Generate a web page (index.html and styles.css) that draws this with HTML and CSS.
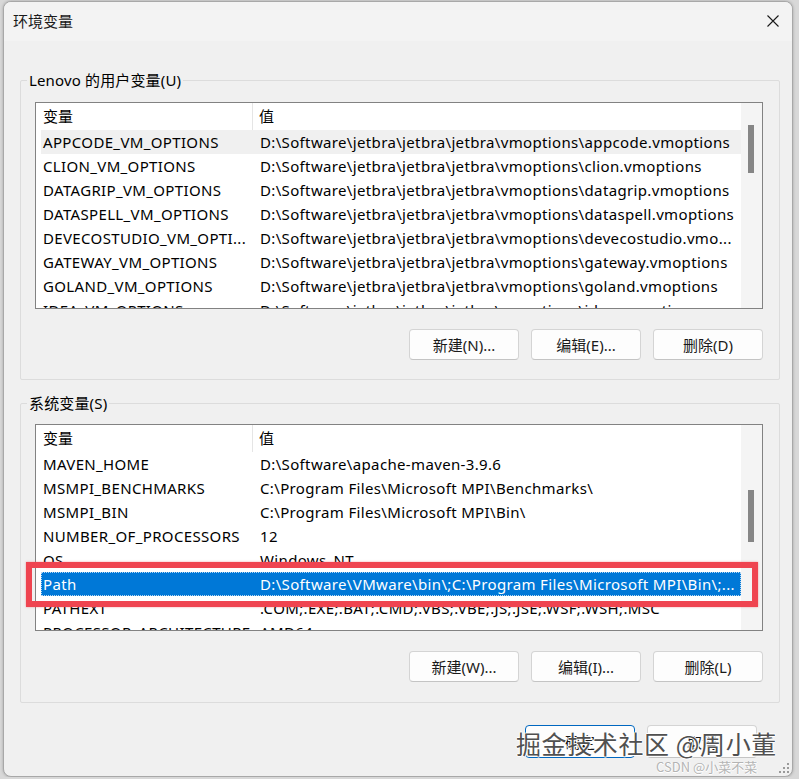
FILE: index.html
```html
<!DOCTYPE html>
<html lang="zh-CN">
<head>
    <meta charset="UTF-8">
    <title>环境变量</title>
    <link rel="stylesheet" href="styles.css">
</head>
<body>

    <div class="window">
        <div class="titlebar">
            <span class="title">环境变量</span>
            <svg class="close" width="12" height="12" viewBox="0 0 12 12">
                <path d="M0.5 0.5 L11.5 11.5 M11.5 0.5 L0.5 11.5" stroke="#1a1a1a" stroke-width="1.1" fill="none"/>
            </svg>
        </div>

        <fieldset class="group group-user">
            <legend>Lenovo 的用户变量(U)</legend>
            <div class="listview">
                <div class="list-main">
                    <div class="list-head">
                        <div class="head-cell first">变量</div>
                        <div class="head-cell">值</div>
                    </div>
                    <div class="row hot"><span>APPCODE_VM_OPTIONS</span><span>D:\Software\jetbra\jetbra\jetbra\vmoptions\appcode.vmoptions</span></div>
                    <div class="row"><span>CLION_VM_OPTIONS</span><span>D:\Software\jetbra\jetbra\jetbra\vmoptions\clion.vmoptions</span></div>
                    <div class="row"><span>DATAGRIP_VM_OPTIONS</span><span>D:\Software\jetbra\jetbra\jetbra\vmoptions\datagrip.vmoptions</span></div>
                    <div class="row"><span>DATASPELL_VM_OPTIONS</span><span>D:\Software\jetbra\jetbra\jetbra\vmoptions\dataspell.vmoptions</span></div>
                    <div class="row"><span>DEVECOSTUDIO_VM_OPTI...</span><span>D:\Software\jetbra\jetbra\jetbra\vmoptions\devecostudio.vmo...</span></div>
                    <div class="row"><span>GATEWAY_VM_OPTIONS</span><span>D:\Software\jetbra\jetbra\jetbra\vmoptions\gateway.vmoptions</span></div>
                    <div class="row"><span>GOLAND_VM_OPTIONS</span><span>D:\Software\jetbra\jetbra\jetbra\vmoptions\goland.vmoptions</span></div>
                    <div class="row"><span>IDEA_VM_OPTIONS</span><span>D:\Software\jetbra\jetbra\jetbra\vmoptions\idea.vmoptions</span></div>
                </div>
                <div class="scrollbar">
                    <div class="thumb thumb-user"></div>
                </div>
            </div>
            <div class="buttons">
                <button class="btn">新建(N)...</button>
                <button class="btn">编辑(E)...</button>
                <button class="btn">删除(D)</button>
            </div>
        </fieldset>

        <fieldset class="group group-system">
            <legend>系统变量(S)</legend>
            <div class="listview">
                <div class="list-main">
                    <div class="list-head">
                        <div class="head-cell first">变量</div>
                        <div class="head-cell">值</div>
                    </div>
                    <div class="row"><span>MAVEN_HOME</span><span>D:\Software\apache-maven-3.9.6</span></div>
                    <div class="row"><span>MSMPI_BENCHMARKS</span><span>C:\Program Files\Microsoft MPI\Benchmarks\</span></div>
                    <div class="row"><span>MSMPI_BIN</span><span>C:\Program Files\Microsoft MPI\Bin\</span></div>
                    <div class="row"><span>NUMBER_OF_PROCESSORS</span><span>12</span></div>
                    <div class="row"><span>OS</span><span>Windows_NT</span></div>
                    <div class="row selected"><span>Path</span><span>D:\Software\VMware\bin\;C:\Program Files\Microsoft MPI\Bin\;...</span></div>
                    <div class="row"><span>PATHEXT</span><span>.COM;.EXE;.BAT;.CMD;.VBS;.VBE;.JS;.JSE;.WSF;.WSH;.MSC</span></div>
                    <div class="row"><span>PROCESSOR_ARCHITECTURE</span><span>AMD64</span></div>
                </div>
                <div class="scrollbar">
                    <div class="thumb thumb-system"></div>
                </div>
            </div>
            <div class="buttons">
                <button class="btn">新建(W)...</button>
                <button class="btn">编辑(I)...</button>
                <button class="btn">删除(L)</button>
            </div>
        </fieldset>

        <div class="footer">
            <button class="btn default">确定</button>
            <button class="btn">取消</button>
        </div>

        <!-- annotation and watermark sit over the dialog -->
        <div class="highlight-box"></div>
        <div class="watermark">掘金技术社区 @周小董</div>
        <div class="watermark-small">CSDN @小菜不菜</div>
        <svg class="grip" width="10" height="10" viewBox="0 0 10 10">
            <rect x="8" y="0" width="2" height="2" fill="#9a9a9a"/>
            <rect x="4" y="4" width="2" height="2" fill="#9a9a9a"/>
            <rect x="8" y="4" width="2" height="2" fill="#9a9a9a"/>
            <rect x="0" y="8" width="2" height="2" fill="#9a9a9a"/>
            <rect x="4" y="8" width="2" height="2" fill="#9a9a9a"/>
            <rect x="8" y="8" width="2" height="2" fill="#9a9a9a"/>
        </svg>
    </div>

</body>
</html>
```

FILE: styles.css
```css
* {
    box-sizing: border-box;
    margin: 0;
    padding: 0;
}

body {
    font-family: 'Noto Sans', 'Noto Sans CJK SC', sans-serif;
    font-size: 15px;
    color: #000;
    background-color: #d8d8d8;
}

.window {
    position: relative;
    width: 790px;
    height: 776px;
    margin: 1px 0 0 3px;
    background-color: #f0f0f0;
    border: 1px solid #a8a8a8;
    border-radius: 8px;
    box-shadow: 0 0 3px rgba(0, 0, 0, 0.25);
    overflow: hidden;
}

.titlebar {
    height: 39px;
    display: flex;
    align-items: center;
    justify-content: space-between;
    padding: 0 13px 2px 9px;
    background-color: #f3f3f3;
}

.title {
    font-family: 'Noto Sans CJK SC', sans-serif;
    color: #1a1a1a;
}

/* group boxes */
.group {
    margin: 29px 12px 0 16px;
    padding: 12px 16px 19px 14px;
    border: 1px solid #dcdcdc;
    border-radius: 2px;
}

.group-system {
    margin-top: 13px;
    padding-top: 11px;
    padding-bottom: 20px;
}

.group legend {
    margin-left: -8px;
    padding: 0 2px;
    line-height: 20px;
    letter-spacing: 0.15px;
}

.listview {
    display: flex;
    height: 207px;
    background-color: #fff;
    border: 1px solid #828282;
    overflow: hidden;
}

.list-main {
    flex: 1;
    overflow: hidden;
}

.list-head {
    display: grid;
    grid-template-columns: 217px 1fr;
    height: 27px;
    align-items: center;
}

.head-cell {
    padding-left: 6px;
    height: 27px;
    line-height: 27px;
}

.head-cell.first {
    padding-left: 7px;
    border-right: 1px solid #e5e5e5;
}

.row {
    display: grid;
    grid-template-columns: 217px 1fr;
    height: 24px;
    line-height: 24px;
    margin-left: 5px;
    white-space: nowrap;
    letter-spacing: 0.35px;
}

.row span {
    padding-left: 2px;
    overflow: hidden;
}

.row.hot {
    background-color: #f0f0f0;
}

.row.selected {
    background-color: #0078d7;
    color: #fff;
    outline: 1px dotted rgba(255, 255, 255, 0.7);
    outline-offset: -1px;
}

.scrollbar {
    position: relative;
    width: 21px;
    background-color: #f4f4f4;
}

.thumb {
    position: absolute;
    left: 7px;
    width: 6px;
    background-color: #868686;
}

.thumb-user {
    top: 22px;
    height: 48px;
}

.thumb-system {
    top: 65px;
    height: 52px;
}

/* buttons */
.buttons {
    display: flex;
    justify-content: flex-end;
    gap: 12px;
    margin-top: 20px;
}

.btn {
    width: 110px;
    height: 31px;
    font-family: 'Noto Sans', 'Noto Sans CJK SC', sans-serif;
    font-size: 15px;
    color: #1a1a1a;
    background-color: #fdfdfd;
    border: 1px solid #d4d4d4;
    border-bottom-color: #c4c4c4;
    border-radius: 4px;
}

.btn.default {
    border: 1px solid #0067c0;
}

.footer {
    display: flex;
    justify-content: flex-end;
    gap: 12px;
    margin-top: 22px;
    padding-right: 35px;
}

.footer .btn {
    height: 33px;
}

/* red annotation over the Path row */
.highlight-box {
    position: absolute;
    left: 22px;
    top: 560px;
    width: 732px;
    height: 45px;
    border: 6px solid #ef4450;
    box-shadow: 0 0 2px rgba(239, 68, 80, 0.5);
}

.watermark {
    position: absolute;
    left: 512px;
    top: 723px;
    font-family: 'Noto Sans CJK SC', sans-serif;
    font-size: 25px;
    letter-spacing: 0.6px;
    color: #505050;
    white-space: nowrap;
    text-shadow: 1px 0 #fff, -1px 0 #fff, 0 1px #fff, 0 -1px #fff;
}

.watermark-small {
    position: absolute;
    left: 652px;
    top: 755px;
    font-family: 'Noto Sans CJK SC', sans-serif;
    font-size: 13px;
    color: #b4b4b4;
    white-space: nowrap;
    text-shadow: 1px 0 #fff, 0 1px #fff;
}

.grip {
    position: absolute;
    right: 3px;
    bottom: 3px;
}
```
